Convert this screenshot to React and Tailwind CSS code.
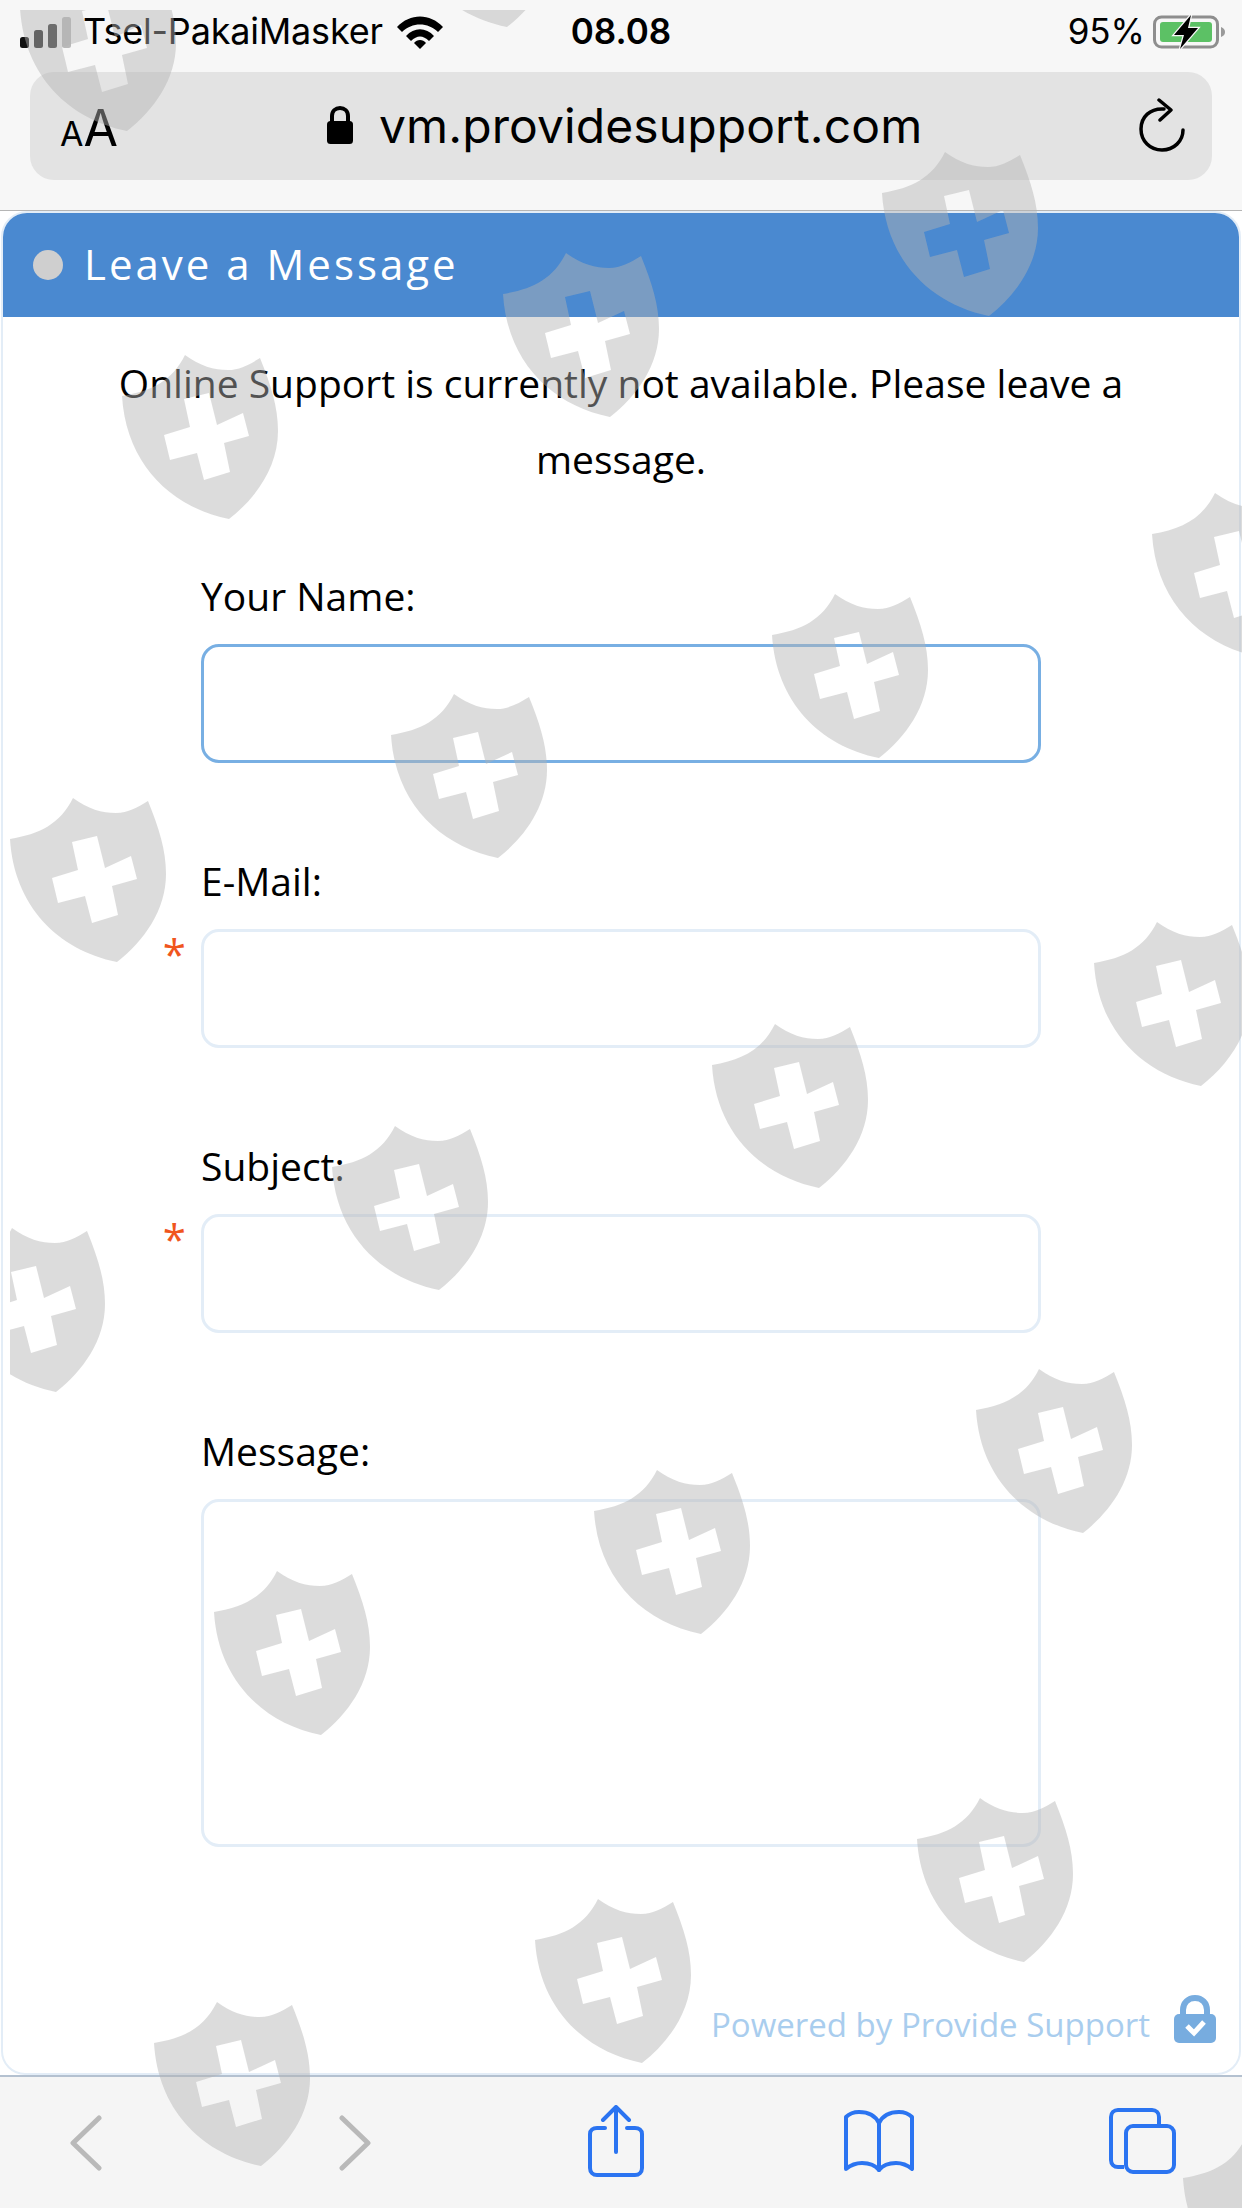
import React from 'react';

// --- WATERMARK ---------------------------------------------------------------
const SHIELD_PATH =
  'M63 0C78 11 92 15 106 15C118 15 128 9 138 3C149 30 156 52 156 76C156 112 134 143 107 164C48 152 4 108 0 41C30 36 50 26 63 0Z' +
  'M62 44L87 38L95 70L121 58L127 81L102 88L108 117L82 125L75 98L48 105L42 80L68 72Z';

// left/top of every shield, in page pixels
const SHIELDS = [
  [20, -33], [400, -137], [882, 152], [503, 253], [122, 355], [1152, 493],
  [772, 594], [391, 694], [10, 798], [1094, 922], [712, 1024], [332, 1126],
  [-51, 1228], [976, 1369], [594, 1470], [214, 1571], [917, 1798], [535, 1899],
  [154, 2002], [1183, 2137],
];

function Watermark() {
  return (
    <svg className="absolute left-[10px] top-[10px] pointer-events-none" width="1232" height="2198" viewBox="10 10 1232 2198">
      {SHIELDS.map(([x, y]) => (
        <path key={`${x}-${y}`} d={SHIELD_PATH} transform={`translate(${x} ${y})`} fill="#b2b2b2" fillOpacity="0.46" fillRule="evenodd" />
      ))}
    </svg>
  );
}

// --- STATUS BAR ICONS --------------------------------------------------------
function SignalIcon() {
  return (
    <svg width="52" height="31" viewBox="0 0 52 31" className="shrink-0">
      <rect x="0" y="20" width="9" height="11" rx="2.5" fill="#111" />
      <rect x="14" y="13" width="9" height="18" rx="2.5" fill="#222" />
      <rect x="28" y="7" width="9" height="24" rx="2.5" fill="#333" />
      <rect x="42" y="0" width="9" height="31" rx="2.5" fill="#b9b9b9" />
    </svg>
  );
}

function WifiIcon() {
  return (
    <svg width="46" height="33" viewBox="0 0 46 33" className="shrink-0">
      <path d="M0 11C13 -3 33 -3 46 11L41 16C31 6 15 6 5 16Z" fill="#000" />
      <path d="M9 20C17 11 29 11 37 20L32 25C26 19 20 19 14 25Z" fill="#000" />
      <path d="M17 27C20 23 26 23 29 27L23 33Z" fill="#000" />
    </svg>
  );
}

function BatteryIcon() {
  return (
    <svg width="73" height="36" viewBox="0 0 73 36" className="shrink-0">
      <rect x="1.5" y="3" width="63" height="30" rx="7" fill="none" stroke="#8e8e8e" strokeWidth="3" />
      <rect x="7" y="8" width="52" height="20" rx="3" fill="#5cc165" />
      <path d="M68 13C71 14 72 16 72 18C72 20 71 22 68 23Z" fill="#9a9a9a" />
      <path d="M38 1L21 21H31L27 35L45 14H35Z" fill="#000" stroke="#f7f7f7" strokeWidth="2.5" paintOrder="stroke" />
    </svg>
  );
}

function PadlockIcon() {
  return (
    <svg width="26" height="38" viewBox="0 0 26 38" className="shrink-0">
      <path d="M5 16V10C5 5 8.500 2 13 2C17.500 2 21 5 21 10V16" fill="none" stroke="#000" strokeWidth="4" />
      <rect x="0" y="15" width="26" height="23" rx="3.500" fill="#000" />
    </svg>
  );
}

function ReloadIcon() {
  return (
    <svg width="46" height="54" viewBox="0 0 46 54" fill="none" stroke="#000" strokeWidth="3.500" strokeLinecap="round" strokeLinejoin="round" className="shrink-0">
      <path d="M25 11C11 10 2 19 2 31C2 43 11 52 23 52C35 52 44 43 44 32" />
      <path d="M20 2L32 12L21 22" />
    </svg>
  );
}

// --- TOOLBAR ICONS -----------------------------------------------------------
function ChevronIcon({ flip }) {
  return (
    <svg width="32" height="56" viewBox="0 0 32 56" fill="none" stroke="#b9b9b9" strokeWidth="5" strokeLinecap="round" strokeLinejoin="round" className="shrink-0">
      <path d={flip ? 'M3 3L29 28L3 53' : 'M29 3L3 28L29 53'} />
    </svg>
  );
}

function ShareIcon() {
  return (
    <svg width="56" height="72" viewBox="0 0 56 72" fill="none" stroke="#2b74f1" strokeWidth="4" strokeLinecap="round" strokeLinejoin="round" className="shrink-0">
      <path d="M17 23H9C5 23 2 25 2 29V63C2 67 5 70 9 70H47C51 70 54 67 54 63V29C54 25 51 23 47 23H39" />
      <path d="M28 47V3" />
      <path d="M15 15L28 2L41 15" />
    </svg>
  );
}

function BookIcon() {
  return (
    <svg width="70" height="62" viewBox="0 0 70 62" fill="none" stroke="#2b74f1" strokeWidth="4" strokeLinecap="round" strokeLinejoin="round" className="shrink-0">
      <path d="M35 13C31 5 24 2 15 2C10 2 6 3 2 7V59C8 54 13 53 18 53C25 53 31 55 35 60C39 55 45 53 52 53C57 53 62 54 68 59V7C64 3 60 2 55 2C46 2 39 5 35 13Z" />
      <path d="M35 13V60" />
    </svg>
  );
}

function TabsIcon() {
  return (
    <svg width="67" height="66" viewBox="0 0 67 66" fill="none" stroke="#2b74f1" strokeWidth="4" strokeLinejoin="round" className="shrink-0">
      <path d="M15 59H9C5 59 2 56 2 52V9C2 5 5 2 9 2H43C47 2 50 5 50 9V18" />
      <rect x="17" y="18" width="48" height="46" rx="7" />
    </svg>
  );
}

function TrustLockIcon() {
  return (
    <svg width="42" height="48" viewBox="0 0 42 48" className="shrink-0">
      <path d="M9 22V15C9 8 14 3 21 3C28 3 33 8 33 15V22" fill="none" stroke="#77acdf" strokeWidth="6" />
      <rect x="0" y="19" width="42" height="29" rx="5" fill="#77acdf" />
      <path d="M13 31L20 38L30 27" fill="none" stroke="#fff" strokeWidth="5" />
    </svg>
  );
}

// --- FORM --------------------------------------------------------------------
function Field({ label, required, focused, tall }) {
  return (
    <div className="grid grid-cols-[198px_840px]">
      <div />
      <label className="text-[39px] leading-[52px] text-black">{label}</label>
      <div className="flex justify-end pr-[15px] pt-[26px]">
        {required && <span className="text-[42px] leading-[42px] text-[#f0561d]">*</span>}
      </div>
      <div
        className={`mt-[22px] rounded-[18px] border-[3px] ${tall ? 'h-[348px]' : 'h-[119px]'} ${focused ? 'border-[#78afe3]' : 'border-[#e3edf7]'}`}
      />
    </div>
  );
}

// --- MAIN COMPONENT ----------------------------------------------------------
export default function App() {
  return (
    <div className="relative w-[1242px] h-[2208px] overflow-hidden bg-white flex flex-col font-['Open_Sans',sans-serif]">

      {/* Safari header */}
      <header className="h-[211px] shrink-0 bg-[#f7f7f7] border-b border-[#b5b5b5] font-['Inter',sans-serif]">
        <div className="flex items-center h-[64px] pl-[20px] pr-[16px] text-black">
          <SignalIcon />
          <span className="ml-[11px] text-[36px] tracking-[-0.2px] leading-none -mt-[2px]">Tsel-PakaiMasker</span>
          <span className="ml-[14px]"><WifiIcon /></span>
          <span className="ml-[128px] text-[35px] font-semibold leading-none -mt-[2px]">08.08</span>
          <span className="ml-auto text-[35px] leading-none -mt-[2px]">95%</span>
          <span className="ml-[8px]"><BatteryIcon /></span>
        </div>
        <div className="mx-[30px] mt-[8px] h-[108px] rounded-[24px] bg-[#e3e3e3] flex items-center pl-[30px] pr-[27px]">
          <span className="w-[58px] text-black leading-none whitespace-nowrap pt-[4px]"><span className="text-[34px]">A</span><span className="text-[50px]">A</span></span>
          <span className="ml-[209px] -mt-[2px]"><PadlockIcon /></span>
          <span className="ml-[26px] text-[48px] tracking-[0.1px] leading-none text-black -mt-[1px]">vm.providesupport.com</span>
          <span className="ml-auto -mt-[3px]"><ReloadIcon /></span>
        </div>
      </header>

      {/* Chat window */}
      <main className="flex-1 mx-[1px] border-x-[2px] border-y-[2px] border-[#e3edf7] rounded-[24px] rounded-t-[26px] flex flex-col">
        <div className="h-[104px] shrink-0 bg-[#4a89d0] rounded-t-[24px] flex items-center pl-[30px]">
          <span className="w-[30px] h-[30px] rounded-full bg-[#cfcfcf]" />
          <span className="ml-[21px] -mt-[3px] text-[42px] tracking-[3px] text-white">Leave a Message</span>
        </div>
        <p className="mt-[28px] mx-auto w-[1040px] text-center text-[39px] leading-[76px] text-black">
          Online Support is currently not available. Please leave a message.
        </p>
        <div className="mt-[73px] flex flex-col gap-[92px]">
          <Field label="Your Name:" focused />
          <Field label="E-Mail:" required />
          <Field label="Subject:" required />
          <Field label="Message:" tall />
        </div>
        <div className="mt-auto mb-[30px] flex items-end justify-end pr-[23px] gap-[24px]">
          <span className="text-[33px] leading-[46px] -mb-[5px] text-[#a9cdee]">Powered by Provide Support</span>
          <TrustLockIcon />
        </div>
      </main>

      {/* Safari toolbar */}
      <footer className="h-[133px] shrink-0 bg-[#f5f5f5] border-t-2 border-[#b4c1d0] flex items-center pl-[70px]">
        <ChevronIcon />
        <span className="ml-[237px]"><ChevronIcon flip /></span>
        <span className="ml-[217px] -mt-[3px]"><ShareIcon /></span>
        <span className="ml-[200px] -mt-[3px]"><BookIcon /></span>
        <span className="ml-[195px] -mt-[3px]"><TabsIcon /></span>
      </footer>

      <Watermark />
    </div>
  );
}
